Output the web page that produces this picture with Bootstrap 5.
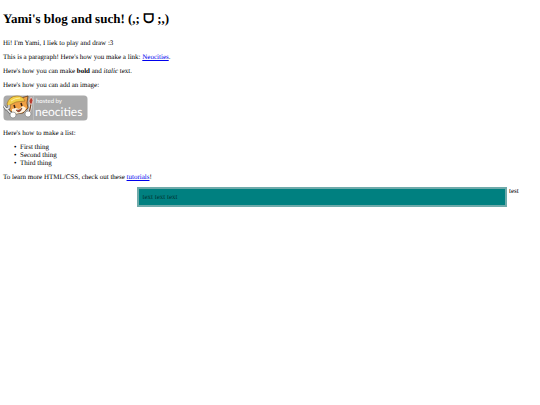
<!DOCTYPE html>
<html lang="en">
<head>
<meta charset="utf-8">
<meta name="viewport" content="width=device-width, initial-scale=1">
<title>Yami's blog and such!</title>
<link href="https://cdn.jsdelivr.net/npm/bootstrap@5.3.0/dist/css/bootstrap.min.css" rel="stylesheet">
<style>
  body { font: 7px/8px "Liberation Serif", "DejaVu Sans", serif; color: #000; padding: 11px 3px 8px; text-rendering: geometricPrecision; }
  h1 { font-size: 13px; line-height: 16px; margin-bottom: 12px; }
  p, ul { margin-bottom: 6px; }
  ul { padding-left: 17px; list-style-type: "•\00a0\00a0"; }
  a { color: #00e; }
  .site-badge { width: 85px; height: 26px; }
  .badge-text { font-family: Lato, sans-serif; fill: #fff; }
  .offset-quarter { margin-left: 25%; }
  .teal-box { background: #008080; border: 2px solid #6faaaa; padding: 4px; color: #033; }
  .side-note { width: 30px; padding-left: 2px; }
</style>
</head>
<body>
<main>
  <h1 class="fw-bold">Yami's blog and such! (,; ᗜ ;,)</h1>
  <p>Hi! I'm Yami, I liek to play and draw :3</p>
  <p>This is a paragraph! Here's how you make a link: <a href="#neocities">Neocities</a>.</p>
  <p>Here's how you can make <strong>bold</strong> and <em>italic</em> text.</p>
  <p>Here's how you can add an image:</p>
  <svg class="site-badge d-block mb-2" viewBox="0 0 85 26" role="img" aria-label="hosted by neocities">
    <rect x="0.5" y="0.5" width="84" height="25" rx="3.5" fill="#aaa"/>
    <path d="M30.5 1v24" stroke="#c4c4c4" stroke-width=".7"/>
    <!-- head and ears -->
    <path d="M6 10 8 3 12 2 18 3 25 1 24 8 25 13 20 18 12 19 6 15z" fill="#f0a044" stroke="#5e3b1e" stroke-width=".8" stroke-linejoin="round"/>
    <!-- muzzle -->
    <path d="m9 14 4-1 3 1 4-3 3 2-1 3-4 2-6 1-3-2z" fill="#fff3e0"/>
    <!-- helmet -->
    <path d="M4 9Q6 1 14 1q6 0 8 5L13 7 5 11z" fill="#f3cf48" stroke="#a6782b" stroke-width=".7"/>
    <path d="M8 6q4-3 9-3" stroke="#fff0a0" fill="none"/>
    <!-- face -->
    <path d="m11 10 1 3M18 8l1 3" stroke="#3c2414" stroke-width="1.5" fill="none"/>
    <path d="m13 15q3 1 6-2-1 4-4 4z" fill="#b9482f" stroke="#54301d" stroke-width=".5"/>
    <!-- wrench -->
    <path d="M1 11l2 3 3-1V10M4 14l6 7" stroke="#555" stroke-width="2.6" fill="none"/>
    <path d="M1 11l2 3 3-1V10M4 14l6 7" stroke="#eee" stroke-width="1.4" fill="none"/>
    <!-- brush -->
    <path d="m28 9-2 10" stroke="#fff" stroke-width="2.6"/>
    <path d="m28 9-2 10" stroke="#7b4526" stroke-width="1.3"/>
    <path d="M27 9 26 6l2-4 2 3-1 4z" fill="#b93a2c" stroke="#fff" stroke-width=".5"/>
    <!-- paws -->
    <circle cx="10" cy="20" r="3" fill="#fff" stroke="#777" stroke-width=".6"/>
    <circle cx="25" cy="19" r="3" fill="#fff" stroke="#777" stroke-width=".6"/>
    <text class="badge-text" x="33" y="8" font-size="6">hosted by</text>
    <text class="badge-text" x="32" y="21" font-size="12">neocities</text>
  </svg>
  <p>Here's how to make a list:</p>
  <ul>
    <li>First thing</li>
    <li>Second thing</li>
    <li>Third thing</li>
  </ul>
  <p>To learn more HTML/CSS, check out these <a href="#tutorials">tutorials</a>!</p>
  <div class="d-flex offset-quarter">
    <div class="teal-box flex-grow-1">text text text</div>
    <div class="side-note flex-shrink-0">test</div>
  </div>
</main>
<script src="https://cdn.jsdelivr.net/npm/bootstrap@5.3.0/dist/js/bootstrap.bundle.min.js"></script>
</body>
</html>
